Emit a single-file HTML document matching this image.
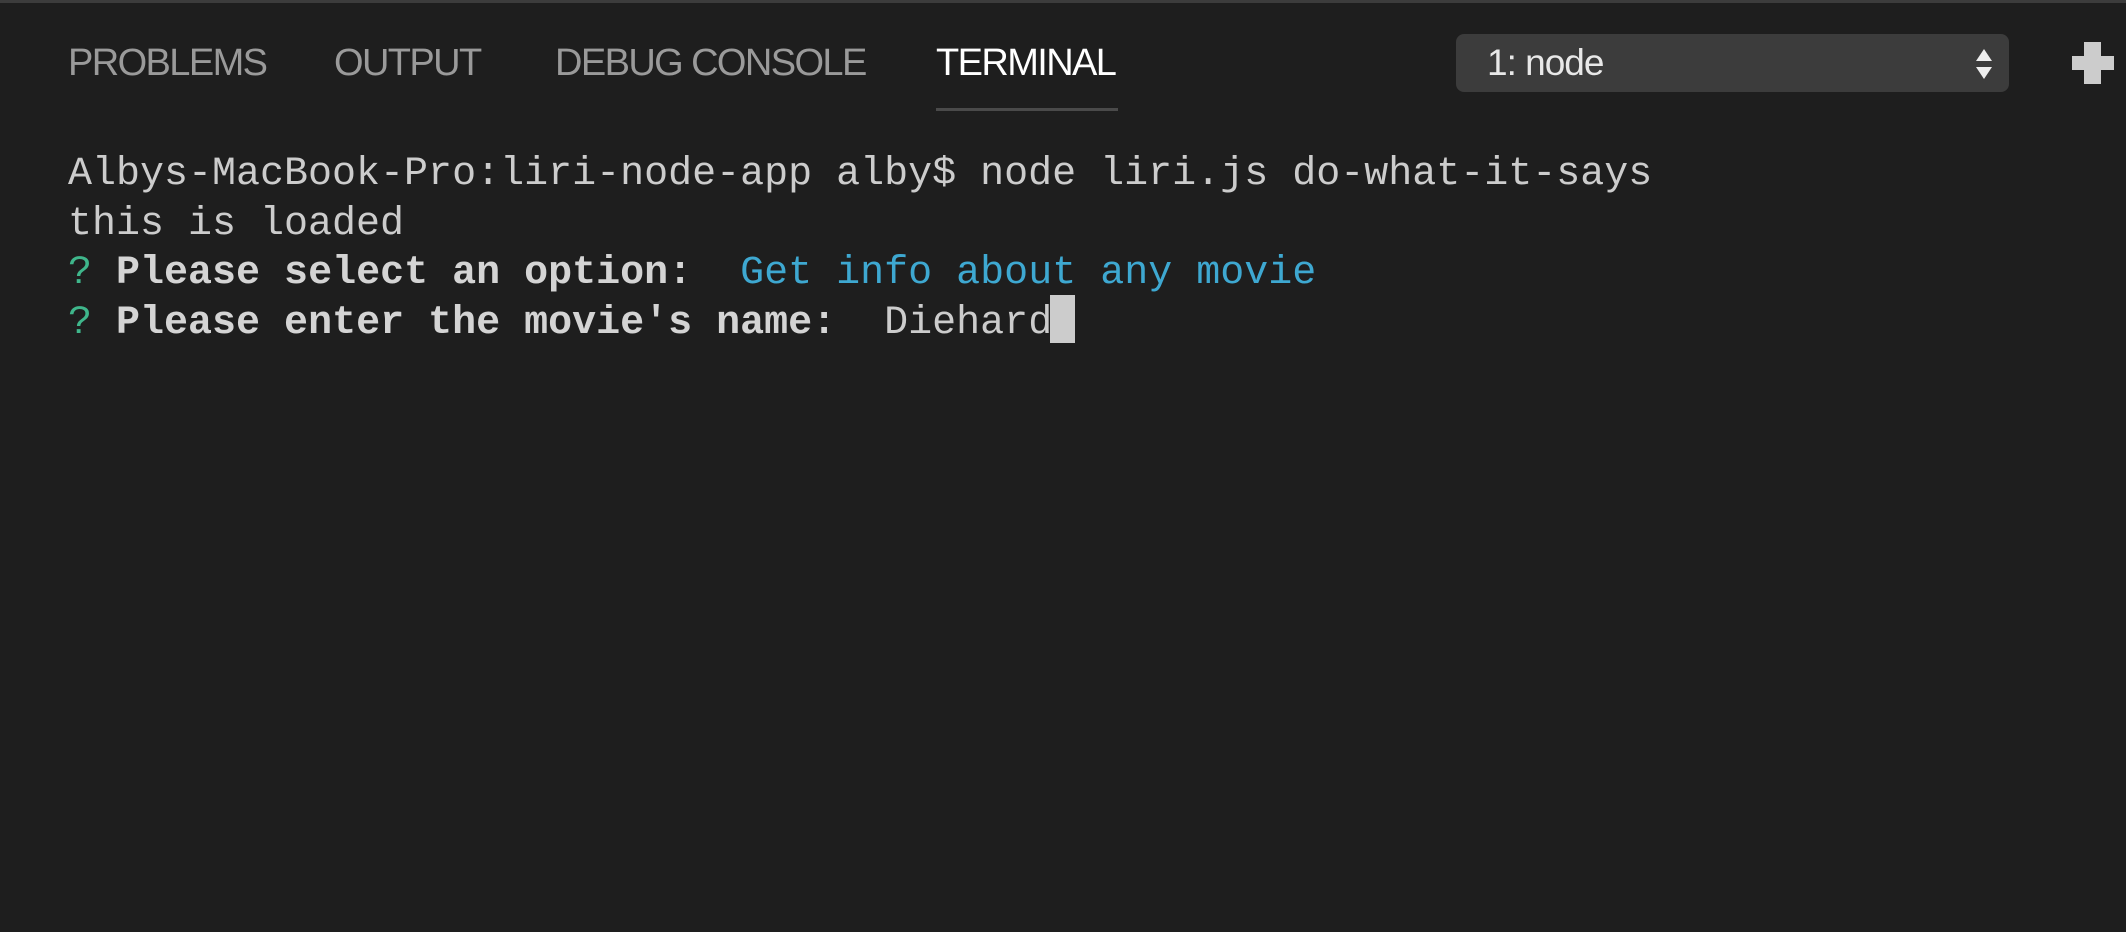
<!DOCTYPE html>
<html><head><meta charset="utf-8"><style>
html,body{margin:0;padding:0;background:#1e1e1e;width:2126px;height:932px;overflow:hidden;position:relative}
.topbar{position:absolute;left:0;top:0;width:2126px;height:3px;background:#3c3c3c}
.tab{position:absolute;top:44px;font:38px/38px "Liberation Sans",sans-serif;color:#9a9a9a;white-space:nowrap;letter-spacing:-1.6px}
.ul{position:absolute;left:936px;top:108px;width:182px;height:3px;background:#4a4a4a}
.sel{position:absolute;left:1456px;top:34px;width:553px;height:58px;background:#3c3c3c;border-radius:8px}
.sel span{position:absolute;left:31px;top:10px;font:37px/38px "Liberation Sans",sans-serif;color:#e8e8e8;letter-spacing:-1px}
.ln{position:absolute;left:68px;font:40px/49.5px "Liberation Mono",monospace;color:#cccccc;white-space:pre}
b{font-weight:bold;color:#d4d4d4}
.g{color:#3fb68b}.c{color:#3ea8d1}
.cur{position:absolute;left:1050px;top:295px;width:25px;height:48px;background:#cccccc}
</style></head><body>
<div class="topbar"></div>
<div class="tab" style="left:68px">PROBLEMS</div>
<div class="tab" style="left:334px">OUTPUT</div>
<div class="tab" style="left:555px">DEBUG CONSOLE</div>
<div class="tab" style="left:936px;color:#ffffff">TERMINAL</div>
<div class="ul"></div>
<div class="sel"><span>1: node</span>
<svg style="position:absolute;left:518px;top:14px" width="20" height="32" viewBox="0 0 20 32"><path d="M10 1 L18 13 L2 13Z M10 31 L18 19 L2 19Z" fill="#eeeeee"/></svg></div>
<svg style="position:absolute;left:2072px;top:42px" width="42" height="42" viewBox="0 0 42 42"><path d="M12 0H29V14H42V28H29V42H12V28H0V14H12Z" fill="#cccccc"/></svg>
<div class="ln" style="top:150px">Albys-MacBook-Pro:liri-node-app alby$ node liri.js do-what-it-says</div>
<div class="ln" style="top:199.5px">this is loaded</div>
<div class="ln" style="top:249px"><span class="g">?</span> <b>Please select an option:</b>  <span class="c">Get info about any movie</span></div>
<div class="ln" style="top:298.5px"><span class="g">?</span> <b>Please enter the movie's name:</b>  Diehard</div>
<div class="cur"></div>
</body></html>
